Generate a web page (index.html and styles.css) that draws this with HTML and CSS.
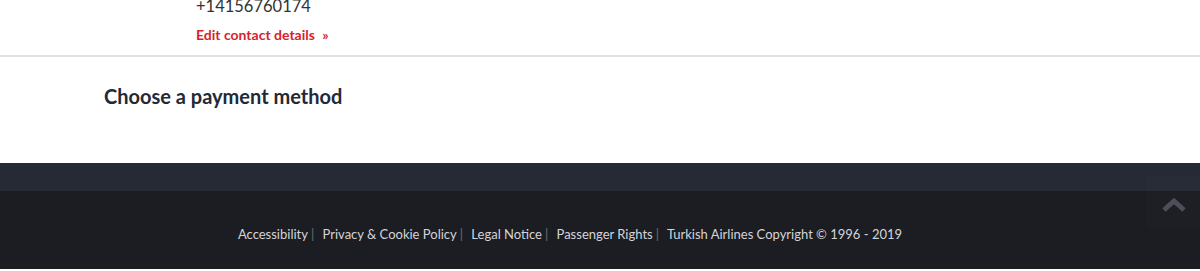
FILE: index.html
```html
<!DOCTYPE html>
<html>
<head>
<meta charset="utf-8">
<link rel="stylesheet" href="styles.css">
</head>
<body>
<section class="contact">
  <div class="phone">+14156760174</div>
  <a class="edit" href="#">Edit contact details <span class="raquo">»</span></a>
</section>
<section class="payment">
  <h2>Choose a payment method</h2>
</section>
<footer class="footer">
  <div class="band"></div>
  <div class="main">
    <nav class="links">
      <a href="#">Accessibility</a><span class="sep">|</span>
      <a href="#">Privacy &amp; Cookie Policy</a><span class="sep">|</span>
      <a href="#">Legal Notice</a><span class="sep">|</span>
      <a href="#">Passenger Rights</a><span class="sep">|</span>
      <span class="copy">Turkish Airlines Copyright © 1996 - 2019</span>
    </nav>
  </div>
  <a class="totop" href="#" aria-label="Back to top">
    <svg width="26" height="16" viewBox="0 0 26 16"><path d="M3 13 L13 4 L23 13" fill="none" stroke="#4c4f57" stroke-width="5" stroke-linecap="butt" stroke-linejoin="miter"/></svg>
  </a>
</footer>
</body>
</html>
```
FILE: styles.css
```css
html, body {
  margin: 0;
  padding: 0;
  background: #fff;
  font-family: Lato, "Open Sans", sans-serif;
  overflow: hidden;
}
.contact {
  display: flex;
  flex-direction: column;
  align-items: flex-start;
  padding: 0 0 0 196px;
  height: 55px;
  border-bottom: 2px solid #e2e2e2;
}
.phone {
  margin-top: -5px;
  font-size: 16.5px;
  line-height: 22px;
  color: #333;
}
.edit {
  margin-top: 10px;
  font-size: 14px;
  font-weight: 700;
  color: #d81e2c;
  text-decoration: none;
  line-height: 16px;
}
.raquo {
  margin-left: 4px;
}
.payment {
  height: 106px;
  padding-left: 104px;
}
.payment h2 {
  margin: 0;
  padding-top: 27px;
  font-size: 20px;
  line-height: 24px;
  font-weight: 700;
  color: #232936;
}
.footer {
  position: relative;
  background: #1b1d23;
  border-bottom: 2px solid #fff;
}
.band {
  height: 28px;
  background: #252a35;
}
.main {
  height: 78px;
  display: flex;
  justify-content: center;
  padding-right: 60px;
}
.links {
  padding-top: 35px;
  font-size: 13px;
  line-height: 16px;
  color: #d4d4d8;
}
.links a {
  color: #d4d4d8;
  text-decoration: none;
}
.sep {
  color: #6b6e75;
  margin: 0 5px 0 3px;
}
.totop {
  position: absolute;
  right: 0;
  top: 12px;
  width: 53px;
  height: 52px;
  display: flex;
  align-items: center;
  justify-content: center;
  background: rgba(255,255,255,0.012);
}
.totop svg {
  margin-top: 8px;
}
```
